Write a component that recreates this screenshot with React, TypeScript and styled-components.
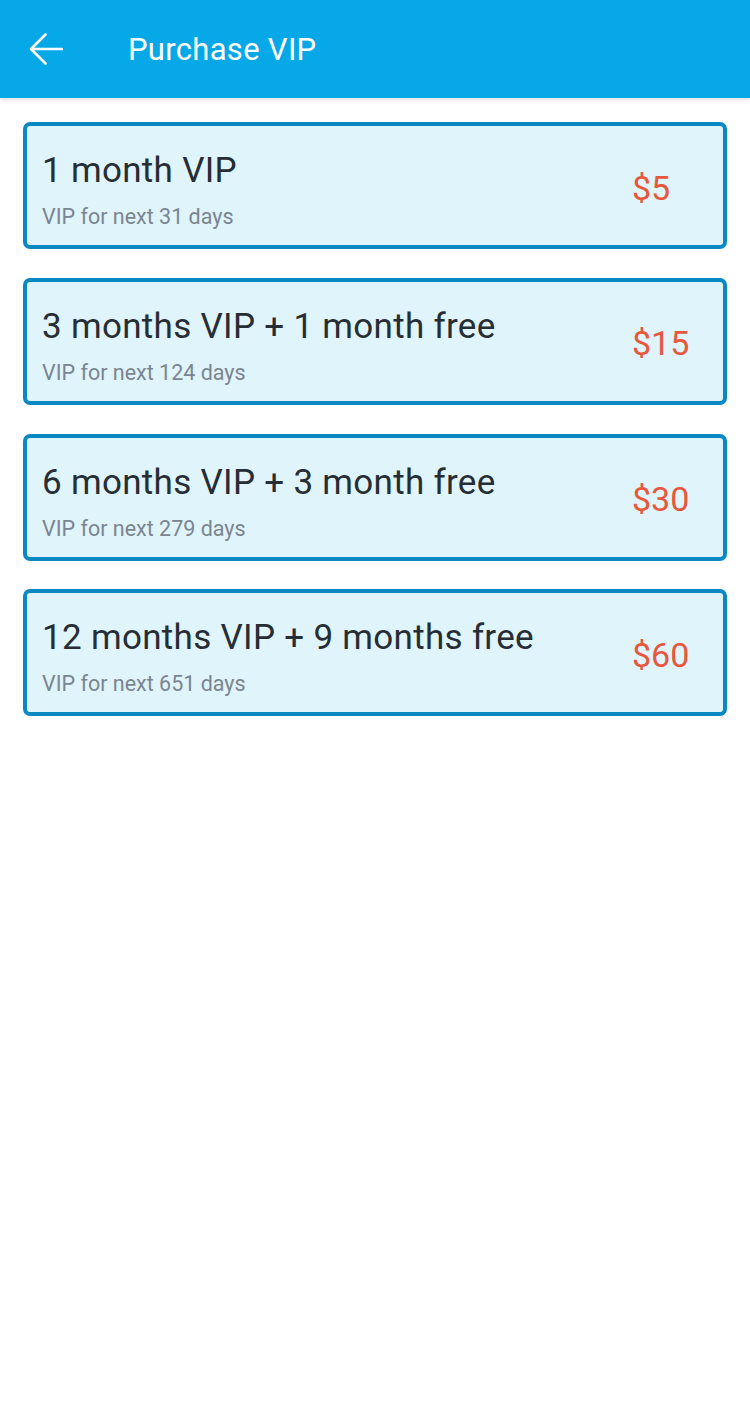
import styled, { createGlobalStyle } from 'styled-components';

const GlobalStyle = createGlobalStyle`
  html, body {
    margin: 0;
    padding: 0;
    background: #ffffff;
  }
  body {
    font-family: Roboto, "Noto Sans", "Liberation Sans", sans-serif;
  }
`;

const Page = styled.div`
  min-height: 1425px;
  background: #ffffff;
`;

const Toolbar = styled.header`
  height: 98px;
  display: flex;
  align-items: center;
  padding-left: 29px;
  background-color: #07a8e8;
  box-shadow: 0 2px 4px rgba(0, 0, 0, 0.12);
`;

const BackButton = styled.button`
  display: flex;
  align-items: center;
  justify-content: center;
  width: 34px;
  height: 34px;
  padding: 0;
  border: 0;
  background: transparent;
  cursor: pointer;
`;

const ToolbarTitle = styled.h1`
  margin: 0 0 0 65px;
  font-size: 31px;
  font-weight: 400;
  color: #ffffff;
  letter-spacing: 0.3px;
`;

const PlanList = styled.div`
  display: flex;
  flex-direction: column;
  gap: 28.8px;
  padding: 24px 23px;
`;

const PlanCard = styled.div`
  box-sizing: border-box;
  height: 127px;
  display: flex;
  align-items: flex-start;
  padding: 25px 0 0 15px;
  border: 4px solid #0a88c4;
  border-radius: 7px;
  background-color: #e0f4fb;
`;

const PlanInfo = styled.div`
  flex: 1;
  display: flex;
  flex-direction: column;
  gap: 12px;
`;

const PlanTitle = styled.div`
  font-size: 35px;
  line-height: 40px;
  letter-spacing: 0.3px;
  color: #272d34;
`;

const PlanSubtitle = styled.div`
  font-size: 21.5px;
  line-height: 28px;
  color: #7a8591;
`;

const Price = styled.div`
  width: 91px;
  align-self: center;
  margin-top: -21px;
  font-size: 34px;
  line-height: 40px;
  color: #e8573c;
`;

type Plan = {
  title: string;
  days: number;
  price: string;
};

const plans: Plan[] = [
  { title: '1 month VIP', days: 31, price: '$5' },
  { title: '3 months VIP + 1 month free', days: 124, price: '$15' },
  { title: '6 months VIP + 3 month free', days: 279, price: '$30' },
  { title: '12 months VIP + 9 months free', days: 651, price: '$60' },
];

const BackArrow = () => (
  <svg width="34" height="34" viewBox="0 0 34 34" fill="none">
    <path
      d="M33 17H2M16.5 2.5L2 17l14.5 14.5"
      stroke="#ffffff"
      strokeWidth="2.6"
      strokeLinecap="round"
      strokeLinejoin="round"
    />
  </svg>
);

export default function App() {
  return (
    <Page>
      <GlobalStyle />
      <Toolbar>
        <BackButton aria-label="Back">
          <BackArrow />
        </BackButton>
        <ToolbarTitle>Purchase VIP</ToolbarTitle>
      </Toolbar>
      <PlanList>
        {plans.map((plan) => (
          <PlanCard key={plan.title}>
            <PlanInfo>
              <PlanTitle>{plan.title}</PlanTitle>
              <PlanSubtitle>VIP for next {plan.days} days</PlanSubtitle>
            </PlanInfo>
            <Price>{plan.price}</Price>
          </PlanCard>
        ))}
      </PlanList>
    </Page>
  );
}
